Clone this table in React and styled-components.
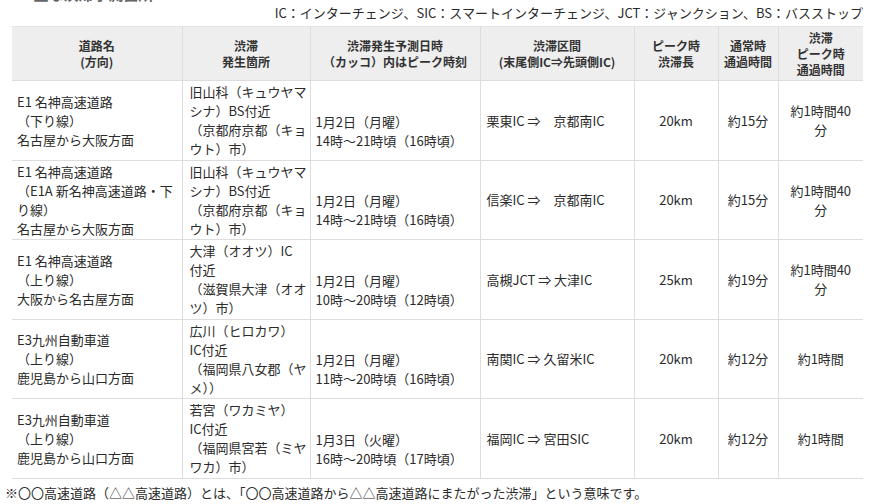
import React from 'react';
import styled, { createGlobalStyle } from 'styled-components';

const GlobalStyle = createGlobalStyle`
  html, body {
    margin: 0;
    padding: 0;
    background: #fff;
  }
  body {
    font-family: "Noto Sans CJK JP", "Noto Sans", sans-serif;
    color: #2b2b2b;
  }
`;

const Page = styled.div`
  width: 870px;
  height: 504px;
  overflow: hidden;
  padding: 0 7px 0 5px;
  box-sizing: border-box;
`;

const Title = styled.h3`
  margin: -16px 0 0 10px;
  font-size: 15px;
  line-height: 19px;
  font-weight: bold;
  color: #666;
`;

const Legend = styled.p`
  margin: 0 0 4px;
  text-align: right;
  font-size: 13px;
  line-height: 19px;
  white-space: nowrap;
`;

const Table = styled.table`
  margin-left: 7px;
  width: 851px;
  table-layout: fixed;
  border-collapse: collapse;
`;

const HeadRow = styled.tr`
  height: 54px;
`;

const HeadCell = styled.th`
  background: #eeeeee;
  border-top: 1px solid #e4e4e4;
  border-bottom: 1px solid #dddddd;
  border-left: 1px solid #dddddd;
  padding: 0 4px;
  font-size: 12px;
  line-height: 16px;
  font-weight: bold;
  color: #333;
  text-align: center;
  vertical-align: middle;
  white-space: nowrap;
  &:first-child {
    border-left: none;
  }
`;

const BodyRow = styled.tr`
  height: 79.5px;
`;

const Cell = styled.td`
  border-bottom: 1px solid #dddddd;
  border-left: 1px solid #dddddd;
  padding: ${(p) => (p.$shift ? '21px' : '0')} 4px 0 ${(p) => p.$pad}px;
  font-size: 13px;
  line-height: 19px;
  text-align: ${(p) => (p.$center ? 'center' : 'left')};
  vertical-align: middle;
  white-space: nowrap;
  &:first-child {
    border-left: none;
  }
`;

const Note = styled.p`
  margin: 4px 0 0;
  font-size: 13px;
  line-height: 19px;
  white-space: nowrap;
`;

const columns = [
  { key: 'road', width: 170, head: ['道路名', '(方向)'], pad: 5 },
  { key: 'spot', width: 128, head: ['渋滞', '発生箇所'], pad: 7 },
  { key: 'date', width: 170, head: ['渋滞発生予測日時', '（カッコ）内はピーク時刻'], pad: 5, shift: true },
  { key: 'section', width: 154, head: ['渋滞区間', '(末尾側IC⇒先頭側IC)'], pad: 6 },
  { key: 'length', width: 84, head: ['ピーク時', '渋滞長'], pad: 4, center: true },
  { key: 'normal', width: 60, head: ['通常時', '通過時間'], pad: 4, center: true },
  { key: 'peak', width: 85, head: ['渋滞', 'ピーク時', '通過時間'], pad: 4, center: true },
];

const rows = [
  {
    road: ['E1 名神高速道路', '（下り線）', '名古屋から大阪方面'],
    spot: ['旧山科（キュウヤマ', 'シナ）BS付近', '（京都府京都（キョ', 'ウト）市）'],
    date: ['1月2日（月曜）', '14時〜21時頃（16時頃）'],
    section: ['栗東IC ⇒　京都南IC'],
    length: ['20km'],
    normal: ['約15分'],
    peak: ['約1時間40', '分'],
  },
  {
    road: ['E1 名神高速道路', '（E1A 新名神高速道路・下', 'り線）', '名古屋から大阪方面'],
    spot: ['旧山科（キュウヤマ', 'シナ）BS付近', '（京都府京都（キョ', 'ウト）市）'],
    date: ['1月2日（月曜）', '14時〜21時頃（16時頃）'],
    section: ['信楽IC ⇒　京都南IC'],
    length: ['20km'],
    normal: ['約15分'],
    peak: ['約1時間40', '分'],
  },
  {
    road: ['E1 名神高速道路', '（上り線）', '大阪から名古屋方面'],
    spot: ['大津（オオツ）IC', '付近', '（滋賀県大津（オオ', 'ツ）市）'],
    date: ['1月2日（月曜）', '10時〜20時頃（12時頃）'],
    section: ['高槻JCT ⇒ 大津IC'],
    length: ['25km'],
    normal: ['約19分'],
    peak: ['約1時間40', '分'],
  },
  {
    road: ['E3九州自動車道', '（上り線）', '鹿児島から山口方面'],
    spot: ['広川（ヒロカワ）', 'IC付近', '（福岡県八女郡（ヤ', 'メ））'],
    date: ['1月2日（月曜）', '11時〜20時頃（16時頃）'],
    section: ['南関IC ⇒ 久留米IC'],
    length: ['20km'],
    normal: ['約12分'],
    peak: ['約1時間'],
  },
  {
    road: ['E3九州自動車道', '（上り線）', '鹿児島から山口方面'],
    spot: ['若宮（ワカミヤ）', 'IC付近', '（福岡県宮若（ミヤ', 'ワカ）市）'],
    date: ['1月3日（火曜）', '16時〜20時頃（17時頃）'],
    section: ['福岡IC ⇒ 宮田SIC'],
    length: ['20km'],
    normal: ['約12分'],
    peak: ['約1時間'],
  },
];

const Lines = ({ lines }) =>
  lines.map((line, i) => (
    <React.Fragment key={i}>
      {i > 0 && <br />}
      {line}
    </React.Fragment>
  ));

const App = () => {
  return (
    <Page>
      <GlobalStyle />
      <Title>■ 主な渋滞予測箇所</Title>
      <Legend>IC：インターチェンジ、SIC：スマートインターチェンジ、JCT：ジャンクション、BS：バスストップ</Legend>
      <Table>
        <colgroup>
          {columns.map((col) => (
            <col key={col.key} style={{ width: col.width }} />
          ))}
        </colgroup>
        <thead>
          <HeadRow>
            {columns.map((col) => (
              <HeadCell key={col.key}>
                <Lines lines={col.head} />
              </HeadCell>
            ))}
          </HeadRow>
        </thead>
        <tbody>
          {rows.map((row, r) => (
            <BodyRow key={r}>
              {columns.map((col) => (
                <Cell key={col.key} $pad={col.pad} $center={col.center} $shift={col.shift}>
                  <Lines lines={row[col.key]} />
                </Cell>
              ))}
            </BodyRow>
          ))}
        </tbody>
      </Table>
      <Note>※〇〇高速道路（△△高速道路）とは、「〇〇高速道路から△△高速道路にまたがった渋滞」という意味です。</Note>
    </Page>
  );
};

export default App;
